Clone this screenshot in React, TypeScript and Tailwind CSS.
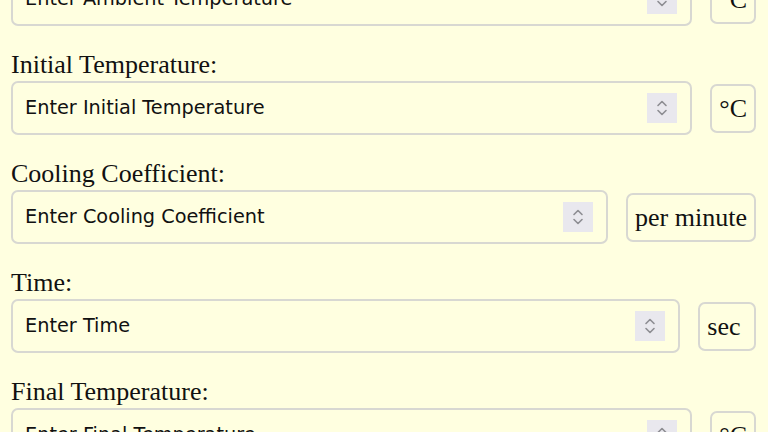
import React from 'react';

interface Field {
    id: string;
    label: string;
    placeholder: string;
    unit: string;
}

const fields: Field[] = [
    { id: 'ambient', label: 'Ambient Temperature:', placeholder: 'Enter Ambient Temperature', unit: '°C' },
    { id: 'initial', label: 'Initial Temperature:', placeholder: 'Enter Initial Temperature', unit: '°C' },
    { id: 'coefficient', label: 'Cooling Coefficient:', placeholder: 'Enter Cooling Coefficient', unit: 'per minute' },
    { id: 'time', label: 'Time:', placeholder: 'Enter Time', unit: 'sec\u00a0' },
    { id: 'final', label: 'Final Temperature:', placeholder: 'Enter Final Temperature', unit: '°C' },
];

function Spinner() {
    return (
        <div className="w-[30px] h-[30px] bg-[#e9e8ee] flex items-center justify-center shrink-0">
            <svg width="14" height="20" viewBox="0 0 14 20" fill="none">
                <path d="M3 7.5 L7 3.5 L11 7.5" stroke="#8d8d92" strokeWidth="1.6" strokeLinecap="round" strokeLinejoin="round" />
                <path d="M3 12.5 L7 16.5 L11 12.5" stroke="#8d8d92" strokeWidth="1.6" strokeLinecap="round" strokeLinejoin="round" />
            </svg>
        </div>
    );
}

function FieldRow({ field }: { field: Field }) {
    return (
        <div className="mb-[24px]">
            <label
                htmlFor={field.id}
                className="block text-[26px] leading-[30px] mb-[1px] text-[#111]"
                style={{ fontFamily: '"Liberation Serif", "Times New Roman", serif' }}
            >
                {field.label}
            </label>
            <div className="flex items-center gap-[18px]">
                <div className="flex-1 h-[54px] flex items-center border-2 border-[#d8d8d2] rounded-[7px] pl-[12px] pr-[13px]">
                    <input
                        id={field.id}
                        type="text"
                        placeholder={field.placeholder}
                        className="flex-1 min-w-0 bg-transparent outline-none text-[19.3px] text-[#111] placeholder:text-[#111]"
                        style={{ fontFamily: '"DejaVu Sans", Verdana, sans-serif' }}
                    />
                    <Spinner />
                </div>
                <div
                    className="h-[49px] flex items-center border-2 border-[#d8d8d2] rounded-[7px] px-[7px] text-[26px] text-[#111] whitespace-nowrap"
                    style={{ fontFamily: '"Liberation Serif", "Times New Roman", serif' }}
                >
                    {field.unit}
                </div>
            </div>
        </div>
    );
}

export default function App() {
    return (
        <div className="w-[768px] h-[432px] overflow-hidden bg-[#ffffe0]">
            <div className="pl-[11px] pr-[12px] -mt-[59px]">
                {fields.map(f => (
                    <FieldRow key={f.id} field={f} />
                ))}
            </div>
        </div>
    );
}
